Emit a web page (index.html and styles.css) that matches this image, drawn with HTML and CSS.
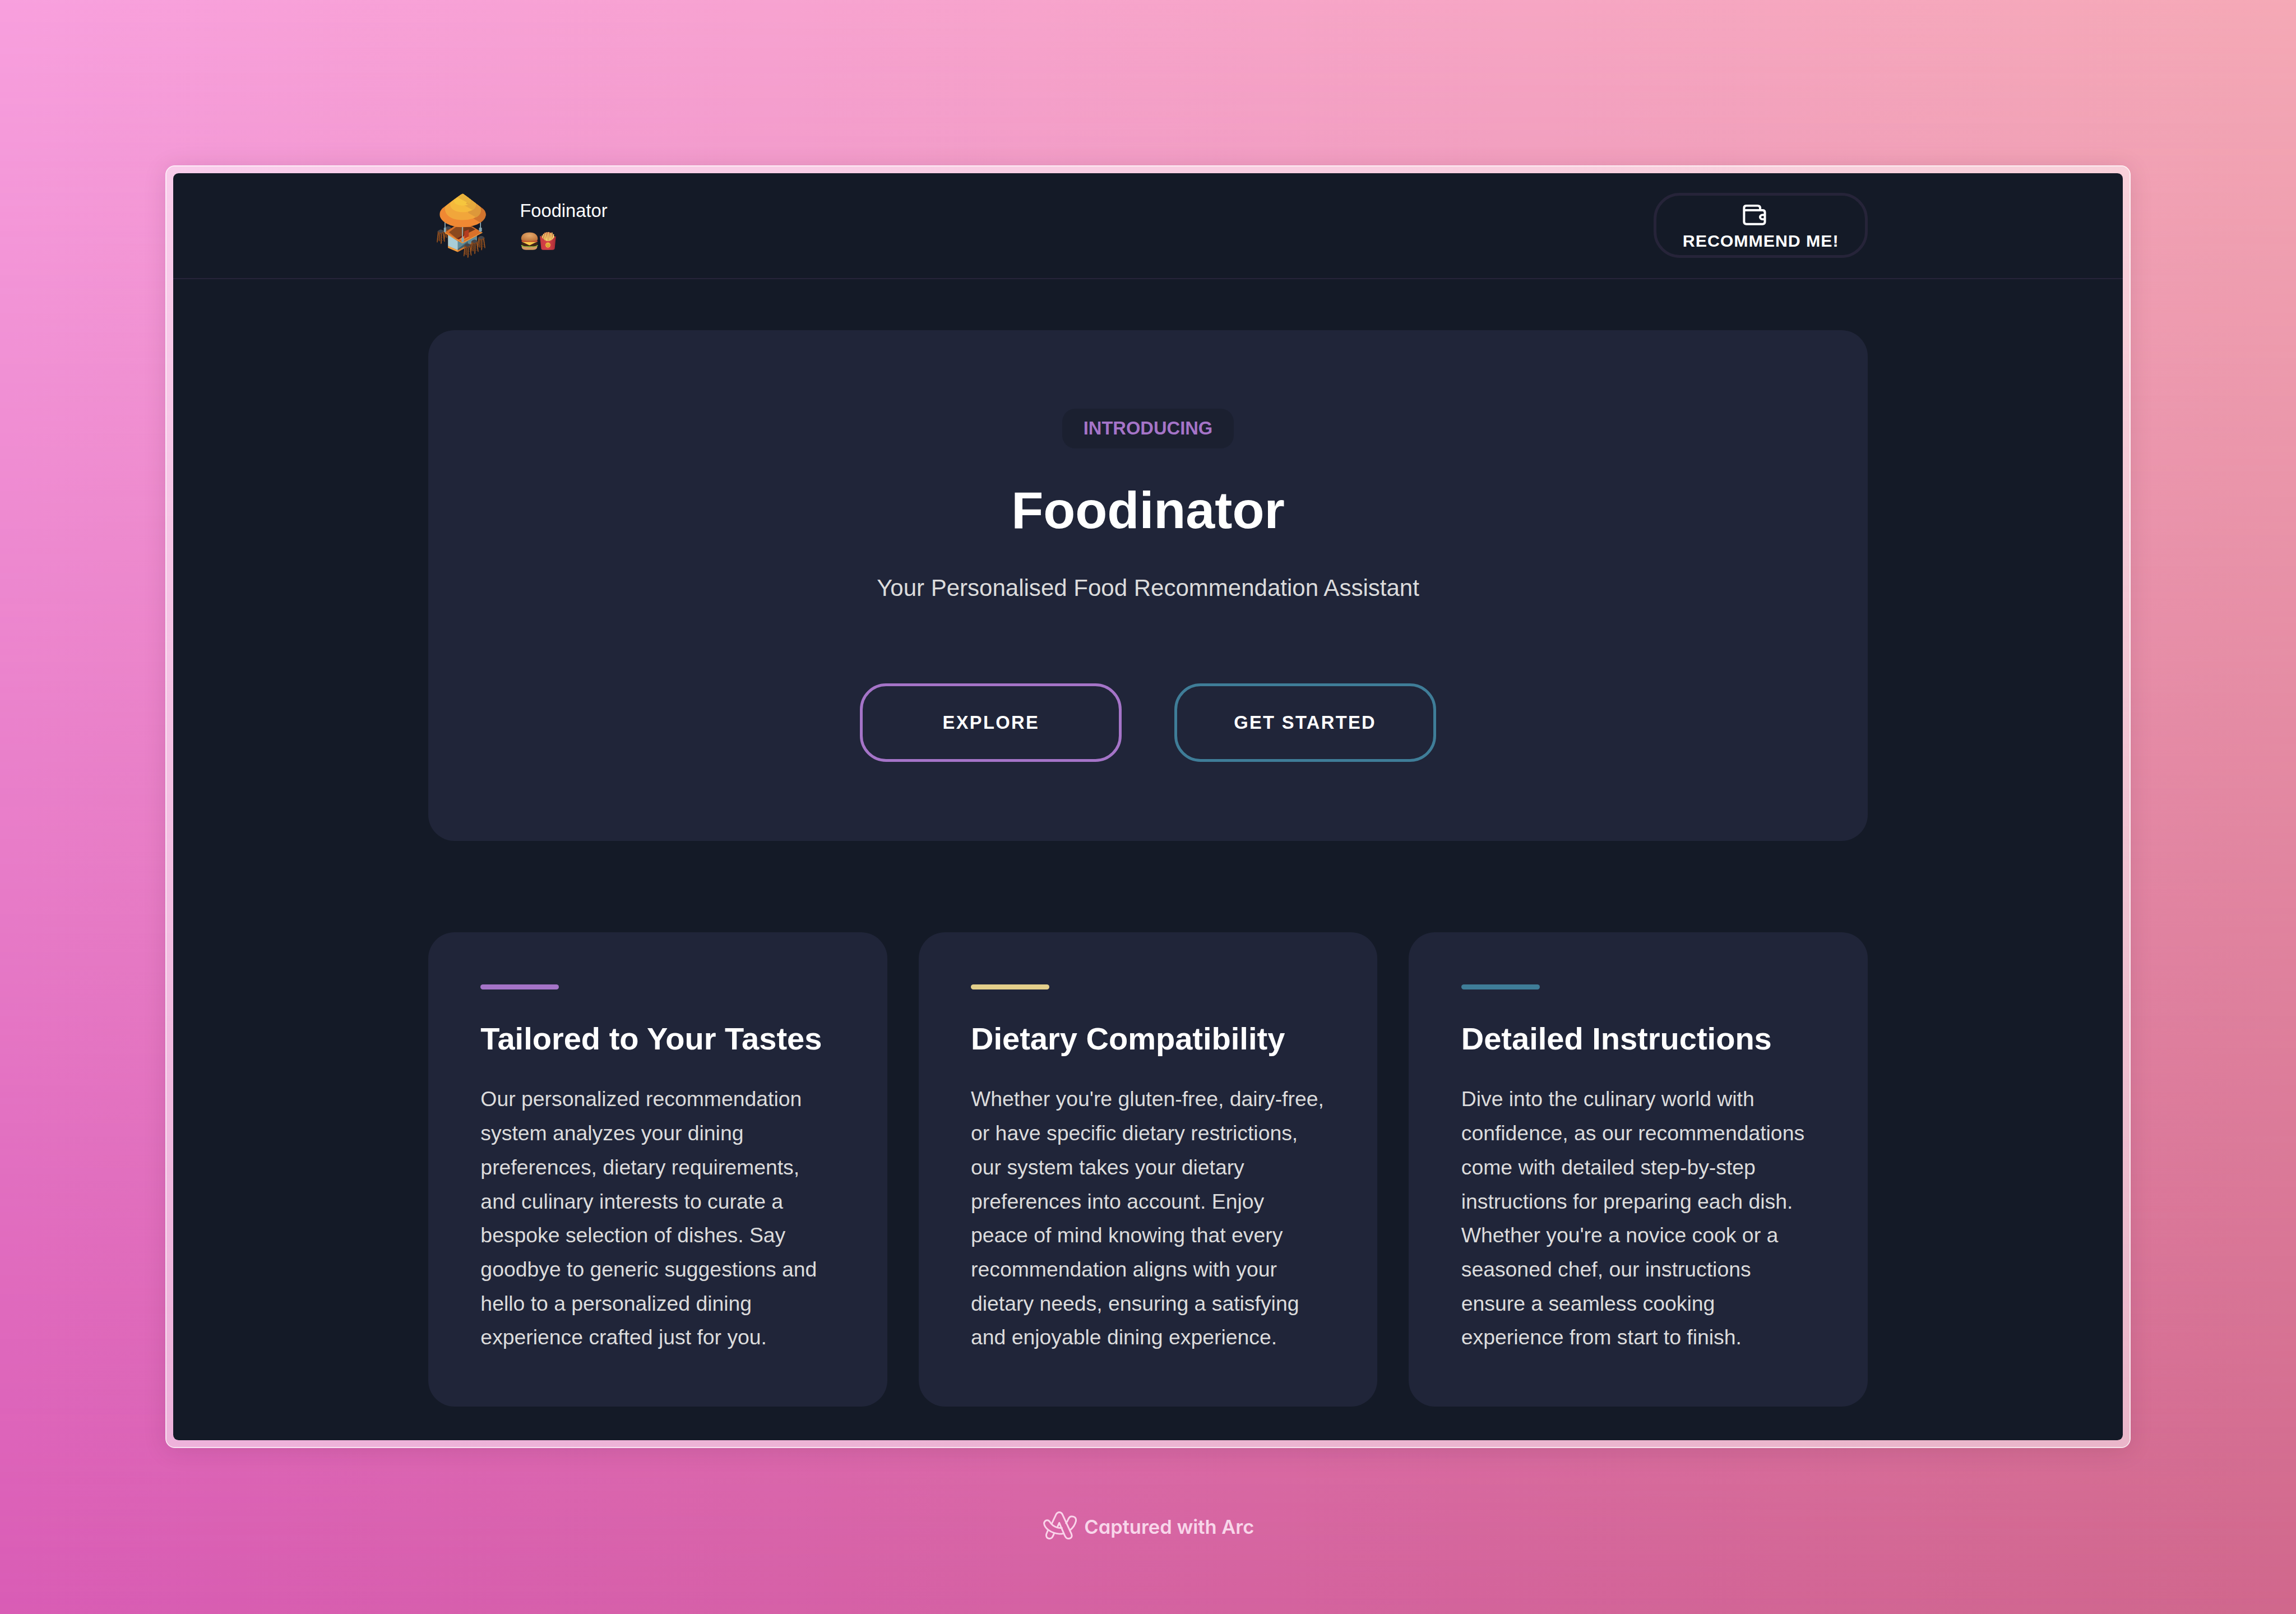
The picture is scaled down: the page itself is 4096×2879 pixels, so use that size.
FILE: index.html
```html
<!DOCTYPE html>
<html lang="en">
<head>
<meta charset="utf-8">
<title>Foodinator</title>
<link rel="stylesheet" href="styles.css">
</head>
<body>
<div class="stage">
  <div class="frame">
    <div class="page">
      <header class="header">
        <div class="container header-row">
          <svg class="logo" viewBox="0 0 390 480" role="img" aria-label="Food stand">
            <defs>
              <clipPath id="roof"><path d="M196 24 Q202 26 330 125 Q350 142 349 165 C345 215 270 247 196 247 C118 247 42 212 42 160 Q42 142 60 122 Q182 28 196 24Z"/></clipPath>
              <g id="stool">
                <path d="M-17 4 L-24 70 M-8 12 L-10 62 M3 12 L2 80 M16 6 L24 66" stroke="#8a4a1c" stroke-width="7" stroke-linecap="round" fill="none"/>
                <path d="M-15 10 L-21 62 M5 16 L4 76 M14 10 L22 60" stroke="#b5692b" stroke-width="2.5" fill="none"/>
                <path d="M-20 38 L3 48 L20 38 M-20 54 L3 64 L22 54" stroke="#6b3715" stroke-width="3" fill="none"/>
                <path d="M-22 0 L-1 -12 L22 0 L21 8 L1 18 L-21 8Z" fill="#7b4420"/>
                <path d="M-17 -6 Q0 -18 17 -6 L18 2 L0 11 L-18 2Z" fill="#43464c"/>
              </g>
            </defs>
            <use href="#stool" x="98" y="252"/>
            <use href="#stool" x="50" y="275"/>
            <path d="M75 282 L98 298 V372 L97 384 L162 412 L235 372 L290 335 V300 L326 282 L250 240 L140 240Z" fill="#c96a24"/>
            <path d="M98 298 L163 340 V400 L98 372Z" fill="#a9cdd6"/>
            <path d="M163 340 L194 352 L290 302 V335 L163 400Z" fill="#5f8a98"/>
            <path d="M163 392 L230 340 V366 L163 402Z" fill="#40606d"/>
            <path d="M98 372 L163 400 V412 L98 384Z" fill="#f0a040"/>
            <path d="M163 400 L235 362 V372 L163 412Z" fill="#d47a30"/>
            <path d="M78 282 L142 242 H260 L322 280 L195 348Z" fill="#d9712a"/>
            <path d="M104 280 L150 246 H252 L270 258 L160 326Z" fill="#8b481d"/>
            <path d="M205 246 H252 L280 262 L196 304Z" fill="#6f3618"/>
            <path d="M160 326 L205 300 L240 314 L196 336Z" fill="#ef8736"/>
            <path d="M158 322 L204 296 V306 L170 328Z" fill="#6a1d16"/>
            <path d="M206 275 L236 262 V308 L206 324Z" fill="#b33c20"/>
            <path d="M75 282 L194 352 L326 282" fill="none" stroke="#f39a3d" stroke-width="5"/>
            <path d="M78 205 V255 M194 240 V322 M314 205 V255" stroke="#9bbac4" stroke-width="6"/>
            <path d="M70 252 L77 248 L85 252 V277 L77 281 L70 277Z M187 320 L194 316 L203 320 V343 L195 348 L187 343Z M304 252 L313 248 L323 252 V274 L314 279 L304 274Z" fill="#86a7b3"/>
            <use href="#stool" x="319" y="317"/>
            <use href="#stool" x="274" y="342"/>
            <use href="#stool" x="228" y="367"/>
            <g clip-path="url(#roof)">
              <rect width="390" height="260" fill="#f08833"/>
              <path d="M260 185 L345 235 L390 120 L290 80Z" fill="#d1742e"/>
              <path d="M196 0 L300 92 C330 140 310 199 196 199 C110 199 70 160 79 110Z" fill="#f1a63b"/>
              <path d="M232 152 L285 182 C325 160 325 120 300 90 L230 60Z" fill="#dd983a"/>
              <path d="M196 0 L280 80 C292 120 256 147 196 147 C140 147 105 120 113 86Z" fill="#f5b93c"/>
              <path d="M200 98 L262 133 C288 118 288 95 270 74 L200 20Z" fill="#e5a93c"/>
              <path d="M196 20 L240 56 L216 92 L234 96 C210 108 140 108 138 72Z" fill="#f6c63e"/>
              <path d="M160 48 L196 20 L252 62 L244 92Z" fill="#e8b23c"/>
            </g>
          </svg>
          <div class="brand">
            <span class="brand-name">Foodinator</span>
            <svg class="brand-emoji" viewBox="0 0 300 192" role="img" aria-label="Burger and fries">
              <defs>
                <radialGradient id="bun" cx=".5" cy=".35" r=".65"><stop offset="0" stop-color="#e5aa6c"/><stop offset="1" stop-color="#bd733a"/></radialGradient>
                <linearGradient id="box" x1="0" x2="1"><stop offset="0" stop-color="#c73a3f"/><stop offset=".5" stop-color="#d8444b"/><stop offset="1" stop-color="#a82b33"/></linearGradient>
              </defs>
              <path d="M32 132 H136 Q138 158 108 159 H60 Q30 158 32 132Z" fill="#d39a62"/>
              <path d="M29 127 Q27 136 40 137 Q52 142 64 138 Q84 146 98 138 Q110 143 122 137 Q142 138 140 127Z" fill="#86b83a"/>
              <path d="M31 118 Q30 110 40 109 H128 Q139 110 138 120 Q136 134 110 135 H60 Q33 134 31 118Z" fill="#3f2417"/>
              <path d="M31 105 H138 L120 112 L92 126 Q84 131 77 126 L50 113Z" fill="#fbc84a"/>
              <path d="M31 99 Q31 95 38 95 H132 Q139 96 138 103 Q137 106 130 105 H38 Q31 106 31 99Z" fill="#c93f2a"/>
              <path d="M29 88 C28 58 50 43 84 43 C118 43 141 60 139 88 Q138 98 124 99 Q84 104 44 99 Q30 97 29 88Z" fill="url(#bun)"/>
              <path d="M170 72 Q172 42 208 41 Q242 42 248 72 L246 90 H172Z" fill="#a31e28"/>
              <path d="M169 66 L178 104 M178 56 L188 102 M188 48 L196 104 M200 45 L203 104 M212 44 L211 104 M223 50 L219 104 M234 47 L226 104 M244 58 L234 104 M246 70 L242 98" stroke="#f3cf6d" stroke-width="8" stroke-linecap="round"/>
              <path d="M183 64 L192 100 M207 54 L208 98 M229 60 L223 100" stroke="#c98f35" stroke-width="2"/>
              <path d="M153 66 Q162 66 170 80 Q184 100 207 101 Q232 100 245 80 Q252 68 260 68 L252 150 Q250 159 240 159 H174 Q163 159 162 150Z" fill="url(#box)"/>
              <circle cx="207" cy="127" r="17" fill="#efb83f"/>
              <path d="M198 130 Q207 142 216 130 M201 121 V124 M213 121 V124" stroke="#8e5a1c" stroke-width="3" fill="none" stroke-linecap="round"/>
            </svg>
          </div>
          <a class="recommend">
            <svg class="wallet" viewBox="645 154 151 144" preserveAspectRatio="none" aria-hidden="true">
              <g fill="none" stroke="#fff" stroke-width="14.5">
                <path d="M757 196 V182 Q757 165 740 165 H669 Q653.500 165 653.500 180 V274 Q653.500 288.500 669 288.500 H772 Q787.500 288.500 787.500 274 V210 Q787.500 195.500 772 195.500 H656"/>
                <path d="M787 227 H771 A14 14 0 0 0 771 256 H787"/>
              </g>
            </svg>
            <span>RECOMMEND ME!</span>
          </a>
        </div>
      </header>
      <main class="container">
        <section class="hero">
          <span class="pill">INTRODUCING</span>
          <h1>Foodinator</h1>
          <p class="tagline">Your Personalised Food Recommendation Assistant</p>
          <div class="actions">
            <a class="btn btn-purple">EXPLORE</a>
            <a class="btn btn-teal">GET STARTED</a>
          </div>
        </section>
        <section class="cards">
          <article class="card">
            <div class="bar bar-purple"></div>
            <h2>Tailored to Your Tastes</h2>
            <p>Our personalized recommendation<br>system analyzes your dining<br>preferences, dietary requirements,<br>and culinary interests to curate a<br>bespoke selection of dishes. Say<br>goodbye to generic suggestions and<br>hello to a personalized dining<br>experience crafted just for you.</p>
          </article>
          <article class="card">
            <div class="bar bar-yellow"></div>
            <h2>Dietary Compatibility</h2>
            <p>Whether you're gluten-free, dairy-free,<br>or have specific dietary restrictions,<br>our system takes your dietary<br>preferences into account. Enjoy<br>peace of mind knowing that every<br>recommendation aligns with your<br>dietary needs, ensuring a satisfying<br>and enjoyable dining experience.</p>
          </article>
          <article class="card">
            <div class="bar bar-teal"></div>
            <h2>Detailed Instructions</h2>
            <p>Dive into the culinary world with<br>confidence, as our recommendations<br>come with detailed step-by-step<br>instructions for preparing each dish.<br>Whether you're a novice cook or a<br>seasoned chef, our instructions<br>ensure a seamless cooking<br>experience from start to finish.</p>
          </article>
        </section>
      </main>
    </div>
  </div>
  <footer class="credit">
    <svg class="arc" viewBox="0 0 300 240" aria-hidden="true">
      <g fill="none" stroke="#fad4ea" stroke-width="11" stroke-linejoin="round" stroke-linecap="round">
        <path d="M84 102 L112 42 Q120 28 133 28 Q147 28 154 42 L214 172 Q221 191 208 200 Q194 207 181 199 Q175 194 170 184 L133 98 L120 128"/>
        <path d="M150 132 Q134 134 118 129 Q86 118 72 94 Q64 80 51 81 Q34 84 32 102 Q34 126 62 147 Q94 170 134 172 Q150 172 163 169"/>
        <path d="M58 147 L47 174 Q44 192 56 200 Q71 207 84 197 Q90 190 99 168"/>
        <path d="M178 101 Q189 86 194 72 Q200 58 212 56 Q226 54 237 62 Q246 70 244 86 Q236 122 203 149"/>
      </g>
    </svg>
    <span class="credit-text">Captured with Arc</span>
  </footer>
</div>
</body>
</html>
```
FILE: styles.css
```css
/* 1rem is ten units of the artboard; one interface pixel is 0.29rem */
html { font-size: 8.0503px; }
* { box-sizing: border-box; margin: 0; padding: 0; }
body {
  font-family: "Liberation Sans", Arial, sans-serif;
  color: #fff;
  overflow: hidden;
}
.stage {
  position: relative;
  z-index: 0;
  width: 100vw;
  height: 100vh;
  padding-top: 36.7rem;
  display: flex;
  flex-direction: column;
  align-items: center;
  background: linear-gradient(to right, #f8a0de, #f5a9b6);
}
.stage::before {
  content: "";
  position: absolute;
  inset: 0;
  z-index: -1;
  background: linear-gradient(to right, #d95cb5, #d0678c);
  -webkit-mask-image: linear-gradient(to bottom, transparent, #000);
  mask-image: linear-gradient(to bottom, transparent, #000);
}
.frame {
  flex: none;
  width: 435.4rem;
  height: 284.1rem;
  padding: 1.45rem;
  border: 2px solid rgba(255, 255, 255, 0.82);
  border-radius: 2.1rem;
  background: rgba(255, 255, 255, 0.5);
  background-clip: padding-box;
  box-shadow: 0 0.6rem 5rem rgba(60, 20, 50, 0.13);
}
.page {
  height: 100%;
  border-radius: 1.2rem;
  overflow: hidden;
  background: #141a27;
}
.container { width: 319rem; margin: 0 auto; }

.header {
  height: 23.5rem;
  border-bottom: 0.3rem solid #262439;
}
.header-row { display: flex; align-items: flex-start; }
.logo { width: 13rem; height: 16rem; margin: 3.7rem 6.2rem 0 1.1rem; }
.brand { display: flex; flex-direction: column; padding-top: 4.9rem; }
.brand-name { font-size: 4.06rem; line-height: 6.8rem; }
.brand-emoji { width: 10rem; height: 6.4rem; margin-left: -0.7rem; }
.recommend {
  margin: 4.3rem 0 0 auto;
  width: 47.4rem;
  height: 14.5rem;
  padding-top: 1.85rem;
  border: 5px solid #262439;
  border-radius: 5.8rem;
  display: flex;
  flex-direction: column;
  align-items: center;
  gap: 1.3rem;
  font-size: 3.77rem;
  line-height: 4.4rem;
  font-weight: 700;
  letter-spacing: 0.12rem;
  white-space: nowrap;
}
.wallet { width: 5.2rem; height: 4.75rem; margin-right: 2.8rem; }

.hero {
  height: 113.1rem;
  margin-top: 11.3rem;
  padding-top: 17.4rem;
  display: flex;
  flex-direction: column;
  align-items: center;
  border-radius: 5.8rem;
  background: #202539;
}
.pill {
  padding: 0 4.64rem;
  border-radius: 2.9rem;
  background: #1b2030;
  color: #a574c8;
  font-size: 4.06rem;
  font-weight: 700;
  line-height: 8.76rem;
}
h1 { margin-top: 7.8rem; font-size: 11.6rem; line-height: 11.6rem; }
.tagline { margin-top: 7.8rem; font-size: 5.22rem; line-height: 7.5rem; color: #dcdcdc; }
.actions { display: flex; gap: 11.6rem; margin-top: 17.4rem; }
.btn {
  width: 58rem;
  height: 17.4rem;
  border: 5px solid;
  border-radius: 5.8rem;
  display: flex;
  align-items: center;
  justify-content: center;
  font-size: 4.06rem;
  font-weight: 700;
  letter-spacing: 0.29rem;
}
.btn-purple { border-color: #a574c8; color: #fff; }
.btn-teal { border-color: #3f7d98; color: #fff; }

.cards {
  margin-top: 20.25rem;
  display: grid;
  grid-template-columns: repeat(3, 1fr);
  gap: 6.96rem;
}
.card {
  padding: 11.6rem 0 11.6rem 11.6rem;
  border-radius: 5.8rem;
  background: #202539;
}
.bar { width: 17.4rem; height: 1.16rem; border-radius: 0.58rem; }
.bar-purple { background: #a574c8; }
.bar-yellow { background: #e3cf8b; }
.bar-teal { background: #3f7d98; }
h2 { margin-top: 6.9rem; font-size: 6.96rem; line-height: 8rem; white-space: nowrap; }
.card p {
  margin-top: 5.6rem;
  font-size: 4.64rem;
  line-height: 7.54rem;
  color: #dcdcdc;
  white-space: nowrap;
}

.credit {
  display: flex;
  align-items: center;
  margin-top: 13.4rem;
  margin-left: -0.6rem;
}
.arc { width: 10rem; height: 8rem; }
.credit-text {
  font-family: Inter, "Liberation Sans", sans-serif;
  font-feature-settings: "cv11";
  font-size: 4.28rem;
  font-weight: 600;
  line-height: 5rem;
  padding-top: 0.4rem;
  color: #f8d6ea;
}
```
